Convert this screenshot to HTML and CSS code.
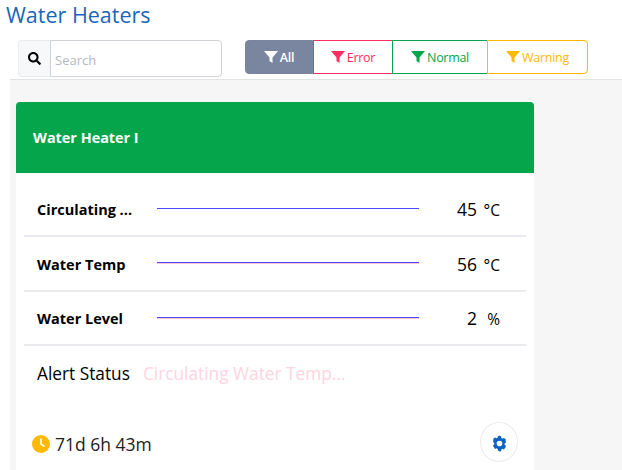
FILE: index.html
```html
<!DOCTYPE html>
<html lang="en">
<head>
<meta charset="utf-8">
<title>Water Heaters</title>
<link rel="stylesheet" href="styles.css">
</head>
<body>
<header class="top">
  <h1 class="title">Water Heaters</h1>
  <div class="toolbar">
    <div class="search">
      <span class="search-icon"><svg width="13" height="13" viewBox="0 0 512 512"><path fill="#000" d="M505 442.700L405.300 343c-4.500-4.500-10.600-7-17-7H372c27.600-35.300 44-79.700 44-128C416 93.100 322.900 0 208 0S0 93.100 0 208s93.100 208 208 208c48.300 0 92.700-16.400 128-44v16.300c0 6.400 2.500 12.500 7 17l99.700 99.700c9.400 9.400 24.600 9.400 33.900 0l28.300-28.300c9.400-9.400 9.400-24.600.1-34zM208 336c-70.700 0-128-57.200-128-128 0-70.700 57.200-128 128-128 70.700 0 128 57.200 128 128 0 70.700-57.200 128-128 128z"/></svg></span>
      <input class="search-input" type="text" placeholder="Search">
    </div>
    <div class="filters">
      <button class="filter all"><svg class="funnel" viewBox="0 0 14 12"><path d="M0 0h14L8.500 6.500V12L5.500 10V6.500z"/></svg>All</button>
      <button class="filter error"><svg class="funnel" viewBox="0 0 14 12"><path d="M0 0h14L8.500 6.500V12L5.500 10V6.500z"/></svg>Error</button>
      <button class="filter normal"><svg class="funnel" viewBox="0 0 14 12"><path d="M0 0h14L8.500 6.500V12L5.500 10V6.500z"/></svg>Normal</button>
      <button class="filter warning"><svg class="funnel" viewBox="0 0 14 12"><path d="M0 0h14L8.500 6.500V12L5.500 10V6.500z"/></svg>Warning</button>
    </div>
  </div>
</header>
<main class="content">
  <section class="card">
    <div class="card-head">Water Heater I</div>
    <div class="card-body">
      <div class="row">
        <span class="label">Circulating ...</span>
        <svg class="spark" viewBox="0 0 262 2"><line x1="0" y1="0.500" x2="262" y2="0.500" stroke="#4a4aff"/></svg>
        <span class="value">45</span><span class="unit">°C</span>
      </div>
      <div class="row row-mid">
        <span class="label">Water Temp</span>
        <svg class="spark" viewBox="0 0 262 2"><line x1="0" y1="1.500" x2="262" y2="1.500" stroke="#ffc4d0"/><line x1="0" y1="0.500" x2="262" y2="0.500" stroke="#4a4aff"/></svg>
        <span class="value">56</span><span class="unit">°C</span>
      </div>
      <div class="row">
        <span class="label">Water Level</span>
        <svg class="spark" viewBox="0 0 262 2"><line x1="0" y1="1.500" x2="262" y2="1.500" stroke="#ffc4d0"/><line x1="0" y1="0.500" x2="262" y2="0.500" stroke="#4a4aff"/></svg>
        <span class="value">2</span><span class="unit">%</span>
      </div>
      <div class="alert">
        <span class="alert-label">Alert Status</span>
        <span class="alert-value">Circulating Water Temp...</span>
      </div>
      <div class="foot">
        <div class="uptime">
          <svg class="clock" width="18" height="18" viewBox="0 0 18 18"><circle cx="9" cy="9" r="9" fill="#ffb900"/><path d="M9 4v5.200l3 2" fill="none" stroke="#fff" stroke-width="1.600" stroke-linecap="round"/></svg>
          <span>71d 6h 43m</span>
        </div>
        <button class="gear-btn"><svg width="17" height="17" viewBox="0 0 24 24"><path fill="#0b63c1" fill-rule="evenodd" d="M12 .8l2.400 1.400v2.100l1.900 1.100 1.800-1 2.400 1.400.6 5-1.800 1v2.400l1.800 1-.6 2.300-2.400 2.900-1.800-1-1.900 1.100v2.100L12 23.200l-2.400-1.400v-2.100l-1.900-1.100-1.800 1-2.400-2.900-.6-2.300 1.800-1v-2.400l-1.800-1 .6-5 2.400-1.400 1.800 1 1.900-1.100V2.200zM12 8a4 4 0 1 0 0 8 4 4 0 0 0 0-8z"/></svg></button>
      </div>
    </div>
  </section>
</main>
</body>
</html>
```

FILE: styles.css
```css
* { box-sizing: border-box; }
html, body { margin: 0; padding: 0; height: 100%; overflow: hidden; }
body {
  background: #fff;
  font-family: "Open Sans", "Noto Sans", sans-serif;
  color: #000;
  width: 622px;
  height: 470px;
}
.top { height: 79px; padding-top: 1px; }
.title {
  margin: 0 0 0 6px;
  font-size: 21.500px;
  line-height: 28px;
  font-weight: 400;
  color: #1a66b8;
}
.toolbar {
  display: flex;
  align-items: flex-start;
  margin-top: 11px;
  margin-left: 18px;
}
.search { display: flex; width: 204px; height: 37px; }
.search-icon {
  width: 32px;
  display: flex;
  align-items: center;
  justify-content: center;
  background: #f7f8fa;
  border: 1px solid #e9ebee;
  border-right: 0;
  border-radius: 4px 0 0 4px;
}
.search-input {
  flex: 1;
  min-width: 0;
  border: 1px solid #cfd2d6;
  border-radius: 0 4px 4px 0;
  padding: 2px 4px 0;
  font: 400 13px "Open Sans", sans-serif;
  outline: 0;
}
.search-input::placeholder { color: #b4b9c2; opacity: 1; }
.filters { display: flex; margin-left: 23px; height: 34px; }
.filter {
  display: flex;
  align-items: center;
  justify-content: center;
  gap: 2px;
  padding: 0;
  background: #fff;
  border: 1px solid;
  font: 600 12.500px "Open Sans", sans-serif;
  letter-spacing: -.3px;
}
.funnel { width: 14px; height: 12px; fill: currentColor; }
.all { width: 68px; background: #7a86a0; border-color: #7a86a0; color: #fff; border-radius: 4px 0 0 4px; }
.error { width: 79px; border-color: #ff2d60; color: #ff2d60; border-right: 0; font-weight: 400; }
.normal { width: 95px; border-color: #04a54b; color: #04a54b; border-right: 0; font-weight: 400; }
.warning { width: 101px; border-color: #ffb900; color: #ffb900; border-radius: 0 4px 4px 0; font-weight: 400; }
.content {
  margin-left: 10px;
  height: 391px;
  background: #f6f6f7;
  border-top: 1px solid #e2e3e5;
  padding: 22px 0 0 6px;
}
.card { width: 518px; }
.card-head {
  height: 71px;
  display: flex;
  align-items: center;
  padding-left: 17px;
  background: #04a54b;
  color: #fff;
  font-weight: 700;
  font-size: 14.400px;
  border-radius: 4px 4px 0 0;
}
.card-body { background: #fff; padding: 10px 8px 0; height: 297px; }
.row {
  display: flex;
  align-items: center;
  height: 54px;
  border-bottom: 2px solid #e9ebee;
  padding-left: 13px;
}
.row-mid { height: 55px; }
.label { width: 120px; font-size: 14.500px; font-weight: 700; padding-top: 1px; }
.spark { width: 262px; height: 2px; align-self: flex-start; margin-top: 25px; }
.value { width: 58px; text-align: right; font-size: 17.500px; }
.unit { width: 23px; text-align: right; font-size: 15.500px; padding-top: 2px; }
.alert {
  display: flex;
  gap: 13px;
  padding: 16px 0 0 13px;
  font-size: 17.300px;
  line-height: 24px;
}
.alert-value { color: #ffd4e0; }
.foot {
  display: flex;
  justify-content: space-between;
  align-items: center;
  margin-top: 36px;
  padding: 0 8px;
}
.uptime { display: flex; align-items: center; gap: 5px; font-size: 17.500px; color: #222; padding-top: 3px; }
.gear-btn {
  width: 38px;
  height: 40px;
  padding: 2px 0 0;
  display: flex;
  align-items: center;
  justify-content: center;
  background: #fff;
  border: 1px solid #e9ebee;
  border-radius: 50%;
}
```
